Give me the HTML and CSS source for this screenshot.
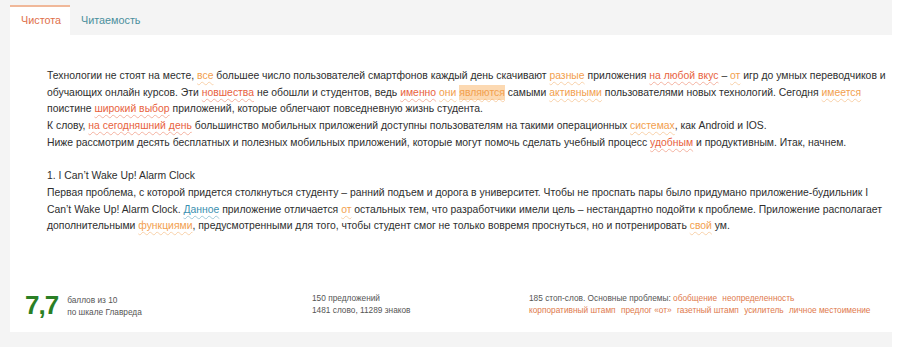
FILE: index.html
```html
<!DOCTYPE html>
<html lang="ru">
<head>
    <meta charset="UTF-8">
    <title>Главред</title>
    <link rel="stylesheet" href="styles.css">
</head>
<body>
    <div class="app">
        <div class="tabs">
            <div class="tab active">Чистота</div>
            <div class="tab">Читаемость</div>
        </div>

        <div class="panel">
            <div class="text">
                <p>Технологии не стоят на месте, <span class="hl y">все</span> большее число пользователей смартфонов каждый день скачивают <span class="hl y">разные</span> приложения <span class="hl r">на любой вкус</span> – <span class="hl y">от</span> игр до умных переводчиков и обучающих онлайн курсов. Эти <span class="hl r">новшества</span> не обошли и студентов, ведь <span class="hl r">именно</span> <span class="hl y">они</span> <span class="hl y mark">являются</span> самыми <span class="hl y">активными</span> пользователями новых технологий. Сегодня <span class="hl y">имеется</span> поистине <span class="hl r">широкий выбор</span> приложений, которые облегчают повседневную жизнь студента.</p>
                <p>К слову, <span class="hl r">на сегодняшний день</span> большинство мобильных приложений доступны пользователям на такими операционных <span class="hl y">системах</span>, как Android и IOS.</p>
                <p>Ниже рассмотрим десять бесплатных и полезных мобильных приложений, которые могут помочь сделать учебный процесс <span class="hl r">удобным</span> и продуктивным. Итак, начнем.</p>
                <p class="gap">1. I Can’t Wake Up! Alarm Clock</p>
                <p>Первая проблема, с которой придется столкнуться студенту – ранний подъем и дорога в университет. Чтобы не проспать пары было придумано приложение-будильник I Can’t Wake Up! Alarm Clock. <span class="hl b">Данное</span> приложение отличается <span class="hl y">от</span> остальных тем, что разработчики имели цель – нестандартно подойти к проблеме. Приложение располагает дополнительными <span class="hl y">функциями</span>, предусмотренными для того, чтобы студент смог не только вовремя проснуться, но и потренировать <span class="hl y">свой</span> ум.</p>
            </div>

            <div class="summary">
                <div class="score">
                    <span class="score-value">7,7</span>
                    <div class="score-label">
                        <div>баллов из 10</div>
                        <div>по шкале Главреда</div>
                    </div>
                </div>
                <div class="stats">
                    <div>150 предложений</div>
                    <div>1481 слово, 11289 знаков</div>
                </div>
                <div class="problems">
                    <div>185 стоп-слов. Основные проблемы: <span class="tag">обобщение</span> <span class="tag">неопределенность</span></div>
                    <div><span class="tag">корпоративный штамп</span> <span class="tag">предлог «от»</span> <span class="tag">газетный штамп</span> <span class="tag">усилитель</span> <span class="tag">личное местоимение</span></div>
                </div>
            </div>
        </div>
    </div>
</body>
</html>
```

FILE: styles.css
```css
body {
    margin: 0;
    background-color: #fff;
    font-family: "Liberation Sans", Arial, sans-serif;
    color: #333;
}

.app {
    width: 882px;
    padding: 0 0 15px 10px;
    background-color: #f4f4f4;
}

.tabs {
    display: flex;
    height: 35px;
    padding-top: 5px;
    box-sizing: border-box;
}

.tab {
    padding: 9px 11px 0 11px;
    font-size: 10.8px;
    color: #4b8f9c;
}

.tab.active {
    width: 38px;
    background-color: #fff;
    border-top: 2px solid #f0b89a;
    padding-top: 7px;
    color: #e0704a;
}

.panel {
    background-color: #fff;
    height: 297px;
    display: flex;
    flex-direction: column;
}

.text {
    padding: 33px 1px 0 37px;
    font-size: 10.4px;
    line-height: 16.7px;
    color: #2e2e2e;
}

.text p {
    margin: 0;
}

.text p.gap {
    margin-top: 16.7px;
}

.hl {
    text-decoration-line: underline;
    text-decoration-style: wavy;
    text-decoration-thickness: 1px;
    text-underline-offset: 2px;
}

.hl.r {
    color: #e8623e;
    text-decoration-color: rgba(232, 98, 62, 0.45);
}

.hl.y {
    color: #f2a04e;
    text-decoration-color: rgba(242, 160, 78, 0.45);
}

.hl.b {
    color: #3a8fb0;
    text-decoration-color: rgba(58, 143, 176, 0.45);
}

.hl.mark {
    background-color: #fcd9b2;
    padding: 2px 0;
}

.summary {
    margin-top: auto;
    display: grid;
    grid-template-columns: 287px 217px auto;
    padding: 0 0 11px 15px;
    font-size: 8.3px;
    line-height: 12px;
    color: #555;
}

.score {
    display: flex;
    align-items: center;
    gap: 9px;
}

.score-value {
    font-size: 26px;
    font-weight: bold;
    letter-spacing: -1px;
    color: #2a7f25;
    line-height: 32px;
}

.score-label {
    padding-top: 2px;
}

.stats, .problems {
    padding-top: 3px;
}

.tag {
    color: #e07a4c;
    margin-right: 3px;
}
```
